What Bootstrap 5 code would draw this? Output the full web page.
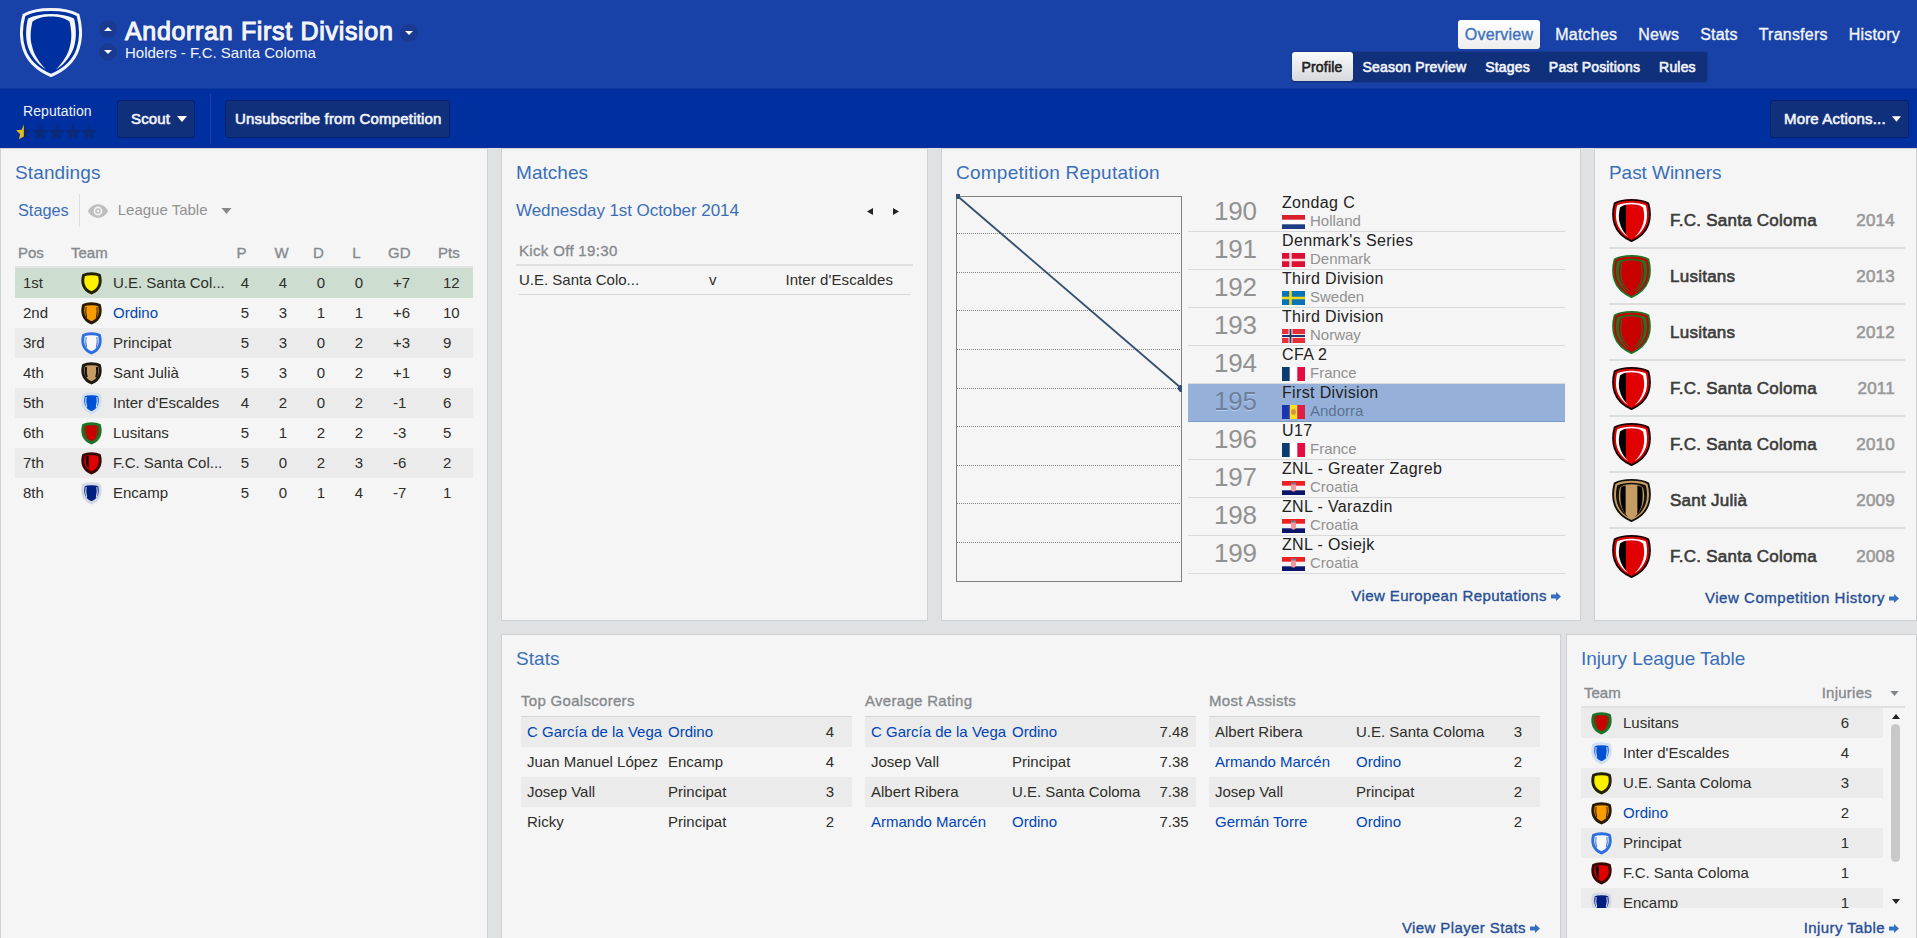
<!DOCTYPE html>
<html lang="en">
<head>
  <meta charset="UTF-8">
  <title>Andorran First Division | Overview</title>
  <meta name="viewport" content="width=device-width, initial-scale=1">
  <!-- Bootstrap CSS -->
  <link href="https://cdn.jsdelivr.net/npm/bootstrap@5.3.2/dist/css/bootstrap.min.css" rel="stylesheet">
  <style>
    body { background: #e0e1e3; color: #2e2e2a; font: 15px/30px "Liberation Sans", Arial, sans-serif; height: 938px; overflow: hidden; }
    a { text-decoration: none; }
    svg { display: block; flex: none; }

    /* Header */
    .top-bar { height: 88px; background: #1942a8; color: #f2f4f8; padding: 8px 9px 0 20px; }
    .arrow-btn { width: 18px; height: 18px; border-radius: 50%; background: #193a90; display: flex; align-items: center; justify-content: center; }
    .arrow-col { margin-left: 17px; padding-top: 12px; gap: 5px; }
    .comp-name { font-size: 25px; line-height: 28px; letter-spacing: .68px; -webkit-text-stroke: 1.1px; text-shadow: 0 1px 2px #0a2a80; margin: 0; font-weight: 400; }
    .holders { line-height: 16px; }
    .main-tabs { height: 29px; margin-top: 12px; gap: 5px; }
    .main-tabs a { color: #eef1f8; font-size: 16px; letter-spacing: .22px; line-height: 30px; padding: 0 8px; -webkit-text-stroke: .35px; border-radius: 3px; }
    .main-tabs a.current { background: linear-gradient(#fff, #eee); color: #3c70bd; padding: 0 7px; margin-right: 2px; }
    .sub-tabs { background: #11307c; height: 30px; width: 415px; margin: 3px 201px 0 auto; border-radius: 3px; box-shadow: 0 0 1px 1px #173a94; }
    .sub-tabs a { color: #f2f4f8; font-size: 14px; letter-spacing: .18px; line-height: 30px; padding: 0 9.5px; -webkit-text-stroke: .6px; white-space: nowrap; }
    .sub-tabs a.current { background: linear-gradient(#fafafa, #d6d9dd); color: #222; border-radius: 3px; height: 29px; width: 61px; }

    /* Action bar */
    .action-bar { height: 60px; background: #002fa0; border-top: 1px solid #1038a0; color: #eef1f8; padding: 0 8px 0 16px; }
    .rep-box { width: 80px; margin-right: 21px; padding-top: 12px; }
    .rep-box span { font-size: 14px; line-height: 20px; padding-left: 7px; letter-spacing: .1px; }
    .dark-btn { height: 38px; background: #11307c; border: 1px solid #06216c; border-radius: 3px; color: #f2f4f8; padding: 0 0 0 13px; font-size: 15px; line-height: 36px; letter-spacing: .17px; display: flex; align-items: center; -webkit-text-stroke: .6px; white-space: nowrap; }
    .bar-split { width: 1px; height: 50px; background: #1c44a6; margin: 0 14px 0 15px; }

    /* Panels */
    .panel { background: #f5f5f5; border: 1px solid #cfd0d2; padding: 10px 14px 0; }
    .panel-title { color: #3a6fb8; font-size: 19px; line-height: 28px; letter-spacing: .05px; margin: 0; font-weight: 400; }
    .grey-head { color: #868a8e; -webkit-text-stroke: .35px; }
    .own { color: #0045b5; }
    .more-link { color: #274f94; letter-spacing: .4px; line-height: 20px; -webkit-text-stroke: .35px; display: flex; justify-content: flex-end; align-items: center; gap: 4px; }

    .stand-row { display: grid; grid-template-columns: 66px 32px 113px 38px 38px 38px 38px 52px 1fr; height: 30px; }
    .stand-row > :first-child { padding-left: 8px; }
    .stand-row .num { text-align: center; }
    .stand-head { height: 32px; border-bottom: 2px solid #e2e3e4; line-height: 33px; }
    .stripe { background: #ebebeb; }
    .leader { background: #cdddd0; }
    .cut { white-space: nowrap; }

    .chart-box { width: 226px; height: 392px; }
    .rep-list { width: 377px; }
    .rep-row { height: 38px; border-bottom: 1px solid #d9dadb; }
    .rep-row.here { background: #95b1d9; border-bottom-color: #7c9cc8; }
    .rep-num { width: 94px; padding-left: 26px; font-size: 26px; line-height: 35px; color: #929292; letter-spacing: -.2px; }
    .rep-name { font-size: 16px; line-height: 18px; letter-spacing: .35px; color: #222; }
    .rep-land { color: #919191; line-height: 18px; gap: 5px; }
    .rep-land svg { margin-top: 1px; }
    .here .rep-num { color: #6d7f9d; text-shadow: 0 1px 0 #b4cbea; }
    .here .rep-land { color: #5f7191; }

    .win-row { height: 56px; border-bottom: 2px solid #dcdddd; font-size: 17px; letter-spacing: .25px; -webkit-text-stroke: .6px; color: #3c3c3a; padding: 0 10px 0 3px; }
    .win-row:last-child { border-bottom-color: transparent; }
    .win-row span { padding-top: 1px; }
    .win-row .year { color: #999; }

    .stat-box { width: 331px; }
    .stat-box h3 { font-size: 15px; line-height: 31px; margin: 0; font-weight: 400; letter-spacing: .3px; }
    .stat-row { display: grid; grid-template-columns: 141px 140px 1fr; height: 30px; padding-left: 6px; white-space: nowrap; }
    .stat-row .num { text-align: center; }

    .inj-row { display: grid; grid-template-columns: 32px 190px 64px; height: 30px; padding-left: 10px; }
    .inj-row .num { text-align: center; }
    .thumb { width: 9px; height: 138px; border-radius: 5px; background: #c8c8c8; margin-top: 5px; }
  </style>
</head>
<body>

<!-- Header -->
<header class="top-bar d-flex">
  <svg id="crest" width="62" height="69" viewBox="0 0 62 69"></svg>
  <div class="arrow-col d-flex flex-column">
    <span class="arrow-btn"><svg width="8" height="4" viewBox="0 0 8 4"><path d="M0 4L4 0L8 4Z" fill="#fff"/></svg></span>
    <span class="arrow-btn"><svg width="8" height="4" viewBox="0 0 8 4"><path d="M0 0L4 4L8 0Z" fill="#fff"/></svg></span>
  </div>
  <div style="margin-left:8px;padding-top:9px">
    <div class="d-flex align-items-center" style="gap:6px">
      <h1 class="comp-name">Andorran First Division</h1>
      <span class="arrow-btn mt-1"><svg width="8" height="4" viewBox="0 0 8 4"><path d="M0 0L4 4L8 0Z" fill="#fff"/></svg></span>
    </div>
    <div class="holders">Holders - F.C. Santa Coloma</div>
  </div>
  <div class="ms-auto">
    <nav class="main-tabs d-flex justify-content-end">
      <a class="current">Overview</a><a>Matches</a><a>News</a><a>Stats</a><a>Transfers</a><a>History</a>
    </nav>
    <nav class="sub-tabs d-flex">
      <a class="current">Profile</a><a>Season Preview</a><a>Stages</a><a>Past Positions</a><a>Rules</a>
    </nav>
  </div>
</header>

<!-- Action bar -->
<div class="action-bar d-flex align-items-center">
  <div class="rep-box align-self-start">
    <span class="d-block">Reputation</span>
    <svg id="stars" class="mt-1" style="margin-top:3px!important" width="82" height="16" viewBox="0 0 82 16"></svg>
  </div>
  <button class="dark-btn" style="width:78px">Scout
    <svg style="margin:1px 0 0 7px" width="10" height="6" viewBox="0 0 10 6"><path d="M0 0L5 6L10 0Z" fill="#fff"/></svg></button>
  <div class="bar-split"></div>
  <button class="dark-btn" style="width:225px;padding-left:9px">Unsubscribe from Competition</button>
  <button class="dark-btn ms-auto" style="width:139px">More Actions...
    <svg style="margin:1px 0 0 6px" width="9" height="6" viewBox="0 0 10 6"><path d="M0 0L5 6L10 0Z" fill="#fff"/></svg></button>
</div>

<main class="d-flex" style="height:790px">
  <!-- Standings -->
  <section class="panel" style="width:488px;border-bottom:0">
    <h2 class="panel-title" style="letter-spacing:.12px">Standings</h2>
    <div class="d-flex align-items-center" style="height:33px;margin:7px 0 9px 3px">
      <span style="color:#3a6fb8;font-size:16.3px;line-height:28px;margin-top:-2px">Stages</span>
      <span style="width:1px;height:33px;background:#dcdddd;margin:0 8px 0 10px"></span>
      <svg width="20" height="14" viewBox="0 0 20 14"><path d="M0 7C4-2 16-2 20 7C16 16 4 16 0 7Z" fill="#bebebe"/><circle cx="10" cy="7" r="3.6" fill="none" stroke="#f5f5f5" stroke-width="1.6"/><circle cx="10" cy="7" r="1.3" fill="#f5f5f5"/></svg>
      <span style="color:#929292;margin:-2px 13px 0 10px">League Table</span>
      <svg width="11" height="6" viewBox="0 0 10 6"><path d="M0 0L5 6L10 0Z" fill="#888"/></svg>
    </div>
    <div class="stand-row stand-head grey-head">
      <span style="padding-left:3px">Pos</span><span style="margin-left:-10px">Team</span><span></span>
      <span class="num" style="margin-left:-7px">P</span><span class="num" style="margin-left:-3px">W</span><span class="num" style="margin-left:-5px">D</span><span class="num" style="margin-left:-5px">L</span><span style="padding-left:10px">GD</span><span style="padding-left:8px">Pts</span>
    </div>
    <div id="standings"></div>
  </section>

  <div class="d-flex flex-column flex-grow-1" style="margin-left:13px;gap:13px">
    <div class="d-flex" style="height:473px;gap:13px">
      <!-- Matches -->
      <section class="panel" style="width:427px">
        <h2 class="panel-title">Matches</h2>
        <div class="d-flex align-items-center" style="margin-top:9px;padding-right:14px;height:30px">
          <span style="color:#3a6fb8;font-size:17px;letter-spacing:-.07px">Wednesday 1st October 2014</span>
          <svg class="ms-auto" width="6" height="7" viewBox="0 0 6 7"><path d="M6 0V7L0 3.5Z" fill="#222"/></svg>
          <svg style="margin-left:20px" width="6" height="7" viewBox="0 0 6 7"><path d="M0 0V7L6 3.5Z" fill="#222"/></svg>
        </div>
        <div class="grey-head" style="margin-top:10px;padding-left:3px;height:30px;border-bottom:2px solid #dfe0e1;letter-spacing:.33px">Kick Off 19:30</div>
        <div class="d-flex" style="height:29px;line-height:28px;margin:0 3px;border-bottom:1px solid #d6d7d8">
          <span>U.E. Santa Colo...</span><span style="margin-left:70px">v</span><span class="ms-auto" style="padding-right:17px;letter-spacing:.08px">Inter d'Escaldes</span>
        </div>
      </section>

      <!-- Competition reputation -->
      <section class="panel" style="width:640px">
        <h2 class="panel-title" style="letter-spacing:.24px">Competition Reputation</h2>
        <div class="d-flex" style="gap:6px;margin-top:5px">
          <svg id="chart" class="chart-box" viewBox="0 0 226 392"></svg>
          <div id="repList" class="rep-list" style="margin-top:2px"></div>
        </div>
        <div class="more-link" style="padding-right:5px;margin-top:2px">View European Reputations <svg class="arr" width="10" height="9"></svg></div>
      </section>

      <!-- Past winners -->
      <section class="panel flex-grow-1" style="padding-right:11px">
        <h2 class="panel-title" style="letter-spacing:-.05px">Past Winners</h2>
        <div id="winners" style="margin-top:6px"></div>
        <div class="more-link" style="padding-right:6px;margin-top:3px;letter-spacing:.53px">View Competition History <svg class="arr" width="10" height="9"></svg></div>
      </section>
    </div>

    <div class="d-flex" style="height:304px;gap:5px">
      <!-- Stats -->
      <section class="panel d-flex flex-column" style="width:1060px;padding-right:20px;border-bottom:0">
        <h2 class="panel-title">Stats</h2>
        <div id="stats" class="d-flex" style="gap:13px;margin:12px 0 0 5px"></div>
        <div class="more-link mt-auto">View Player Stats <svg class="arr" width="10" height="9"></svg></div>
      </section>

      <!-- Injury table -->
      <section class="panel flex-grow-1" style="padding-right:11px;border-bottom:0">
        <h2 class="panel-title" style="letter-spacing:-.07px">Injury League Table</h2>
        <div class="d-flex align-items-center grey-head" style="height:35px;border-bottom:2px solid #dfe0e1;padding:7px 6px 0 3px">
          <span>Team</span><span class="ms-auto" style="margin-right:18px;letter-spacing:.25px">Injuries</span>
          <svg width="9" height="5" viewBox="0 0 10 6"><path d="M0 0L5 6L10 0Z" fill="#80858c"/></svg>
        </div>
        <div class="d-flex" style="height:200px">
          <div id="injuries" class="overflow-hidden" style="width:302px"></div>
          <div class="d-flex flex-column align-items-center" style="margin-left:8px;padding:6px 0 4px">
            <svg width="8" height="5" viewBox="0 0 8 5"><path d="M0 5L4 0L8 5Z" fill="#222"/></svg>
            <div class="thumb"></div>
            <svg class="mt-auto" width="8" height="5" viewBox="0 0 8 5"><path d="M0 0L4 5L8 0Z" fill="#222"/></svg>
          </div>
        </div>
        <div class="more-link" style="padding-right:6px;margin-top:10px">Injury Table <svg class="arr" width="10" height="9"></svg></div>
      </section>
    </div>
  </div>
</main>

<!-- Bootstrap JS and dependencies -->
<script src="https://cdn.jsdelivr.net/npm/bootstrap@5.3.2/dist/js/bootstrap.bundle.min.js"></script>
<script>
  const $ = id => document.getElementById(id);

  // Shield outlines, drawn on a 62 x 69 grid
  const OUTER = 'M31 1.5C20 1.5 11 3 4 7C1.5 16 0 29 4 41C8 53 18 62 31 67.5C44 62 54 53 58 41C62 29 60.5 16 58 7C51 3 42 1.5 31 1.5Z';
  const BAND = 'M31 6C22 6 14 7.5 8 10.5C6 18 5 29 8 39C11 48 17 56 26 61.5C19 54 14 47 12 38C9.5 29 11 20 12.5 13.5C18 9.5 24 8.5 31 8.5C38 8.5 44 9.5 49.5 13.5C51 20 52.5 29 50 38C48 47 43 54 36 61.5C45 56 51 48 54 39C57 29 56 18 54 10.5C48 7.5 40 6 31 6Z';

  const teams = {
    ue: { ring: '#222000', body: '#faf000' },
    or: { ring: '#2a1a00', body: '#f89c00', side: '#3a2400' },
    pr: { ring: '#2f6ede', body: '#f8f8fa', side: '#3f78dd' },
    sj: { ring: '#1e1a12', body: '#c49c64', side: '#14100a', wide: true },
    in: { ring: '#d3deef', body: '#0050d4', side: '#dfeaff' },
    lu: { ring: '#1c7428', body: '#c80000', side: '#3c5a10' },
    fc: { ring: '#3a0808', body: '#e00000', left: true },
    en: { ring: '#d4d8e4', body: '#001e80', side: '#e4e8f4' }
  };

  function smallShield(key) {
    const t = teams[key];
    let extra = '';
    if (t.side) extra = `<path d="M15 15Q12 32 17 46M47 15Q50 32 45 46" stroke="${t.side}" stroke-width="${t.wide ? 6 : 3}" fill="none"/>`;
    if (t.left) extra = '<path d="M14 13H23V52Q12 40 14 13Z" fill="#180000"/>';
    // pale rings leave no body colour outside them
    return `<svg width="21" height="23" viewBox="0 0 62 69" preserveAspectRatio="none" style="margin-top:4px">
      <path d="${OUTER}" fill="${t.body}" transform="translate(4 4) scale(.87)"/>${extra}
      <path d="${OUTER}" fill="none" stroke="${t.ring}" stroke-width="10" transform="translate(4 4) scale(.87)"/></svg>`;
  }

  function bigShield(ring, body, band, inner) {
    return `<path d="${OUTER}" fill="${body}" stroke="${ring}" stroke-width="3"/>${inner}<path d="${BAND}" fill="${band}"/>`;
  }
  const bigArt = {
    fc: bigShield('#140000', '#e00000', '#fff', '<path d="M12.5 12L22 9V57Q10 46 11 26Z" fill="#000"/>'),
    lu: bigShield('#1c7428', '#c80000', '#1c7428', '<path d="M15 14Q12 30 16 44Q20 52 27 58M47 14Q50 30 46 44Q42 52 35 58" stroke="#1c7428" stroke-width="1.6" fill="none"/>'),
    sj: bigShield('#14100a', '#c49c64', '#14100a', '<path d="M14.5 13.5L21 11V55Q11 42 14.5 13.5ZM47.5 13.5L41 11V55Q51 42 47.5 13.5Z" fill="#000" stroke="#000"/>')
  };

  $('crest').innerHTML = bigShield('#f4f6fa', '#002fa0', '#f4f6fa', '');

  // Half a star out of five
  const star = 'M8 0L10.3 5.3L16 5.8L11.8 9.6L13 15L8 12.2L3 15L4.2 9.6L0 5.8L5.7 5.3Z';
  $('stars').innerHTML = [0, 1, 2, 3, 4].map(i => `<path transform="translate(${i * 16.3} .5) scale(.98)" d="${star}" fill="#0b2a78"/>`).join('') +
    '<path transform="translate(0 .5) scale(.98)" d="M8 0V12.2L3 15L4.2 9.6L0 5.8L5.7 5.3Z" fill="#e3b91c"/>';

  document.querySelectorAll('.arr').forEach(a => {
    a.innerHTML = '<path d="M0 2.5H5V0L10 4.5L5 9V6.5H0Z" fill="#3470c0"/>';
  });

  // Standings
  const standings = [
    ['1st', 'ue', 'U.E. Santa Col...', 4, 4, 0, 0, '+7', 12],
    ['2nd', 'or', 'Ordino', 5, 3, 1, 1, '+6', 10],
    ['3rd', 'pr', 'Principat', 5, 3, 0, 2, '+3', 9],
    ['4th', 'sj', 'Sant Julià', 5, 3, 0, 2, '+1', 9],
    ['5th', 'in', "Inter d'Escaldes", 4, 2, 0, 2, '-1', 6],
    ['6th', 'lu', 'Lusitans', 5, 1, 2, 2, '-3', 5],
    ['7th', 'fc', 'F.C. Santa Col...', 5, 0, 2, 3, '-6', 2],
    ['8th', 'en', 'Encamp', 5, 0, 1, 4, '-7', 1]
  ];
  $('standings').innerHTML = standings.map((r, i) => `
    <div class="stand-row ${i === 0 ? 'leader' : i % 2 === 0 ? 'stripe' : ''}">
      <span>${r[0]}</span>${smallShield(r[1])}<span class="cut ${r[1] === 'or' ? 'own' : ''}">${r[2]}</span>
      <span class="num">${r[3]}</span><span class="num">${r[4]}</span><span class="num">${r[5]}</span><span class="num">${r[6]}</span>
      <span style="padding-left:15px">${r[7]}</span><span style="padding-left:13px">${r[8]}</span>
    </div>`).join('');

  // Reputation chart
  const lines = [41.5, 80.5, 118.5, 157.5, 196.5, 234.5, 273.5, 311.5, 350.5];
  $('chart').innerHTML = '<rect x=".5" y="4.5" width="225" height="385" fill="none" stroke="#808080"/>' +
    lines.map(y => `<path d="M1 ${y}H225" stroke="#808080" stroke-dasharray="1 1"/>`).join('') +
    '<path d="M2 4.5L225 196" stroke="#34506f" stroke-width="1.8"/><rect x="0" y="2" width="4" height="5" fill="#34506f"/><path d="M226 193H224L221 196.5L224 200H226Z" fill="#34506f"/>';

  // Flags, 23 x 14
  const cross = (bg, c, w) => `<rect width="23" height="14" fill="${bg}"/><path d="M8.5 0V14M0 7H23" stroke="${c}" stroke-width="${w}"/>`;
  const bars = (a, b, c) => `<rect width="8" height="14" fill="${a}"/><rect x="7.7" width="8" height="14" fill="${b}"/><rect x="15.3" width="7.7" height="14" fill="${c}"/>`;
  const bands = (a, b, c) => `<rect width="23" height="5" fill="${a}"/><rect y="4.7" width="23" height="5" fill="${b}"/><rect y="9.3" width="23" height="4.7" fill="${c}"/>`;
  const flags = {
    Holland: bands('#d8202c', '#fff', '#1c3c84'),
    Denmark: cross('#dc1034', '#f8dce0', 2.4),
    Sweden: cross('#0874b8', '#f4d818', 2.6),
    Norway: cross('#e63038', '#f8e0e4', 4) + '<path d="M8.5 0V14M0 7H23" stroke="#24366e" stroke-width="1.8"/>',
    France: bars('#0a3c70', '#fff', '#e40c40'),
    Andorra: bars('#1c34b4', '#f8e020', '#dc2048') + '<ellipse cx="11.5" cy="7" rx="2.5" ry="3" fill="#d8963c"/>',
    Croatia: bands('#f02020', '#f4f4f6', '#0a1468') + '<path d="M9 3H14V8Q14 10.5 11.5 10.8Q9 10.5 9 8Z" fill="#f09a9c"/><rect x="9" y="1.5" width="5" height="2" fill="#7a7488"/>'
  };
  const reps = [
    [190, 'Zondag C', 'Holland'], [191, "Denmark's Series", 'Denmark'], [192, 'Third Division', 'Sweden'],
    [193, 'Third Division', 'Norway'], [194, 'CFA 2', 'France'], [195, 'First Division', 'Andorra'],
    [196, 'U17', 'France'], [197, 'ZNL - Greater Zagreb', 'Croatia'], [198, 'ZNL - Varazdin', 'Croatia'], [199, 'ZNL - Osiejk', 'Croatia']
  ];
  $('repList').innerHTML = reps.map(r => `
    <div class="rep-row d-flex ${r[0] === 195 ? 'here' : ''}">
      <div class="rep-num">${r[0]}</div>
      <div><div class="rep-name">${r[1]}</div>
      <div class="rep-land d-flex align-items-center"><svg width="23" height="14" viewBox="0 0 23 14">${flags[r[2]]}</svg>${r[2]}</div></div>
    </div>`).join('');

  // Past winners
  const winners = [['fc', 2014], ['lu', 2013], ['lu', 2012], ['fc', 2011], ['fc', 2010], ['sj', 2009], ['fc', 2008]];
  const names = { fc: 'F.C. Santa Coloma', lu: 'Lusitans', sj: 'Sant Julià' };
  $('winners').innerHTML = winners.map(w => `
    <div class="win-row d-flex align-items-center">
      <svg width="39" height="43" viewBox="0 0 62 69">${bigArt[w[0]]}</svg>
      <span style="margin-left:19px">${names[w[0]]}</span><span class="year ms-auto">${w[1]}</span>
    </div>`).join('');

  // Stats
  const stats = {
    'Top Goalscorers': [['C García de la Vega', 'Ordino', 4], ['Juan Manuel López', 'Encamp', 4], ['Josep Vall', 'Principat', 3], ['Ricky', 'Principat', 2]],
    'Average Rating': [['C García de la Vega', 'Ordino', 7.48], ['Josep Vall', 'Principat', 7.38], ['Albert Ribera', 'U.E. Santa Coloma', 7.38], ['Armando Marcén', 'Ordino', 7.35]],
    'Most Assists': [['Albert Ribera', 'U.E. Santa Coloma', 3], ['Armando Marcén', 'Ordino', 2], ['Josep Vall', 'Principat', 2], ['Germán Torre', 'Ordino', 2]]
  };
  $('stats').innerHTML = Object.entries(stats).map(([title, rows]) => `
    <div class="stat-box"><h3 class="grey-head">${title}</h3><div style="border-top:1px solid #d4d5d6">` +
    rows.map((r, i) => {
      const own = r[1] === 'Ordino' ? 'own' : '';
      return `<div class="stat-row ${i % 2 === 0 ? 'stripe' : ''}"><span class="${own}">${r[0]}</span><span class="${own}">${r[1]}</span><span class="num">${r[2]}</span></div>`;
    }).join('') + '</div></div>').join('');

  // Injuries
  const injuries = [['lu', 'Lusitans', 6], ['in', "Inter d'Escaldes", 4], ['ue', 'U.E. Santa Coloma', 3], ['or', 'Ordino', 2], ['pr', 'Principat', 1], ['fc', 'F.C. Santa Coloma', 1], ['en', 'Encamp', 1]];
  $('injuries').innerHTML = injuries.map((r, i) => `
    <div class="inj-row ${i % 2 === 0 ? 'stripe' : ''}">${smallShield(r[0])}<span class="${r[0] === 'or' ? 'own' : ''}">${r[1]}</span><span class="num">${r[2]}</span></div>`).join('');
</script>
</body>
</html>
